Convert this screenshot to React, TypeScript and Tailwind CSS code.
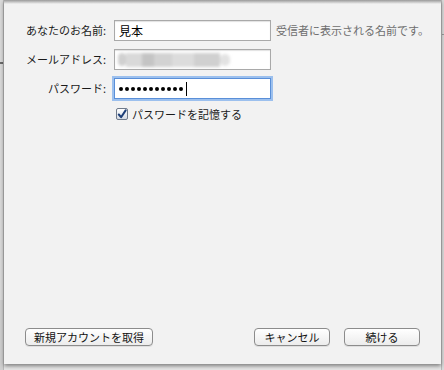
import React from 'react'

const font = { fontFamily: '"Noto Sans CJK JP", "Liberation Sans", sans-serif' }

function MacButton({ label, width }: { label: string; width: string }) {
  return (
    <button
      className={`${width} h-[18px] rounded-[4px] border border-[#8c8c8c] bg-gradient-to-b from-white to-[#ececec] text-[11px] leading-none text-[#111] shadow-[0_1px_0_rgba(0,0,0,0.08)] flex items-center justify-center`}
    >
      {label}
    </button>
  )
}

export default function App() {
  return (
    <div className="w-[444px] h-[370px] bg-[#e6e6e6] flex overflow-hidden" style={font}>
      {/* background window peeking on the left */}
      <div className="w-[4px] h-full flex flex-col bg-[#dadada] border-r border-[#b9b9b9]">
        <div className="h-[62px]" />
        <div className="h-[2px] bg-[#6a6a6a]" />
        <div className="flex-1" />
        <div className="h-[70px] bg-[#cfcfcf]" />
      </div>

      {/* sheet */}
      <div className="w-[437px] h-[364px] flex flex-col bg-[#f2f2f2] shadow-[0_2px_4px_rgba(0,0,0,0.45)] relative">
        <div className="absolute top-0 left-0 right-0 h-[4px] bg-gradient-to-b from-[#9a9a9a] to-[#f2f2f2]" />

        <div className="flex flex-col gap-[8px] pt-[20px]">
          <div className="flex items-center">
            <div className="w-[102px] text-right text-[11px] text-[#1a1a1a]">あなたのお名前:</div>
            <div className="ml-[8px] w-[157px] h-[21px] bg-white border border-[#a9a9a9] shadow-[inset_0_1px_1px_rgba(0,0,0,0.12)] flex items-center px-[4px] text-[12px] text-black">
              見本
            </div>
            <div className="ml-[5px] text-[11px] text-[#6e6e6e] whitespace-nowrap">受信者に表示される名前です。</div>
          </div>

          <div className="flex items-center">
            <div className="w-[102px] text-right text-[11px] text-[#1a1a1a]">メールアドレス:</div>
            <div className="ml-[8px] w-[157px] h-[21px] bg-white border border-[#a9a9a9] shadow-[inset_0_1px_1px_rgba(0,0,0,0.12)] flex items-center px-[3px] overflow-hidden">
              <div className="flex items-center blur-[1.5px]">
                <div className="w-[8px] h-[13px] rounded-full bg-[#d0d0d0]" />
                <div className="w-[16px] h-[14px] bg-[#d9d9d9]" />
                <div className="w-[12px] h-[14px] bg-[#c4c4c4]" />
                <div className="w-[18px] h-[14px] bg-[#d2d2d2]" />
                <div className="w-[22px] h-[14px] bg-[#dcdcdc]" />
                <div className="w-[26px] h-[14px] bg-[#d0d0d0]" />
                <div className="w-[10px] h-[12px] rounded-full bg-[#e2e2e2]" />
              </div>
            </div>
          </div>

          <div className="flex items-center">
            <div className="w-[102px] text-right text-[11px] text-[#1a1a1a]">パスワード:</div>
            <div className="ml-[8px] w-[157px] h-[21px] bg-white border border-[#5a8fd8] shadow-[0_0_0_2px_#9cc0ee] flex items-center px-[4px] gap-[2px]">
              {Array.from({ length: 11 }).map((_, i) => (
                <div key={i} className="w-[4px] h-[4px] rounded-full bg-black" />
              ))}
              <div className="ml-[1px] w-[1px] h-[14px] bg-black" />
            </div>
          </div>
        </div>

        <div className="flex items-center ml-[112px] mt-[7px] gap-[4px]">
          <div className="w-[12px] h-[12px] rounded-[2px] border border-[#6f7a8a] bg-gradient-to-b from-white to-[#d5dbe4] flex items-center justify-center">
            <svg width="11" height="11" viewBox="0 0 11 11">
              <path d="M2 5.5 L4.5 8.5 L9.5 1" fill="none" stroke="#1d3f78" strokeWidth="2.2" strokeLinecap="round" strokeLinejoin="round" />
            </svg>
          </div>
          <span className="text-[11px] text-[#1a1a1a]">パスワードを記憶する</span>
        </div>

        <div className="flex-1" />

        <div className="flex items-center px-[21px] pb-[18px]">
          <MacButton label="新規アカウントを取得" width="w-[128px]" />
          <div className="flex-1" />
          <MacButton label="キャンセル" width="w-[76px]" />
          <div className="w-[14px]" />
          <MacButton label="続ける" width="w-[76px]" />
        </div>
      </div>

      {/* background window peeking on the right */}
      <div className="w-[3px] h-full flex flex-col bg-[#dadada] border-l border-[#b9b9b9]">
        <div className="h-[34px]" />
        <div className="h-[1px] bg-[#9a9a9a]" />
        <div className="flex-1" />
      </div>
    </div>
  )
}
